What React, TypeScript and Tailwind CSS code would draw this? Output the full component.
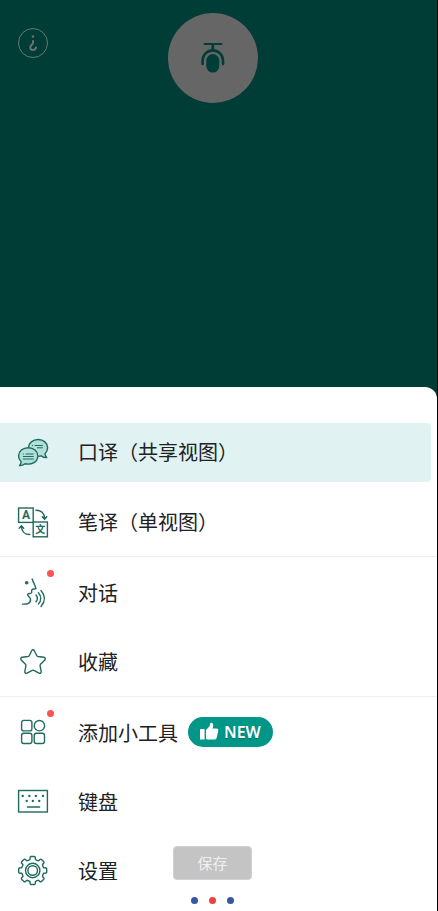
import { ReactNode, useState } from "react";

type MenuItem = {
  id: string;
  label: string;
  icon: ReactNode;
  hasDot?: boolean;
  isNew?: boolean;
};

const Icon = ({ children }: { children: ReactNode }) => (
  <svg
    className="size-[30px] overflow-visible"
    viewBox="0 0 30 30"
    fill="none"
    stroke="#1f6b5c"
    strokeWidth="1.4"
    strokeLinecap="round"
    strokeLinejoin="round"
    aria-hidden="true"
  >
    {children}
  </svg>
);

const ChatIcon = () => (
  <Icon>
    <path
      d="M10.5 9.8C10.5 5 14.8 1.5 20.2 1.5S29.600 5 29.600 9.800c0 2.500-1 4.500-2.600 6 .2 1.500.8 2.600 1.700 3.800-2.300.1-4.100-.6-5.500-1.700-6.700 1.600-12.700-2-12.700-8.100z"
      fill="#b2dfdb"
    />
    <path d="M14.500 7.500h.2M17 7.500h7.500M19.500 9.800h5" strokeWidth="1" />
    <path
      d="M19.800 17.900c0-4.700-4.300-8.200-9.600-8.200S.6 13.200.6 17.900c0 2.500 1 4.400 2.600 5.900-.2 1.500-.7 2.600-1.700 3.800 2.300.1 4.100-.6 5.500-1.800 6.800 1.500 12.800-2 12.800-7.900z"
      fill="#b2dfdb"
    />
    <path d="M5.300 16h.2M8 16h7.300M5.300 18.500h10M5.300 21h10" strokeWidth="1" />
  </Icon>
);

const TranslateIcon = () => (
  <Icon>
    <g strokeLinejoin="miter">
      <rect x="0.600" y="0" width="14.600" height="14.400" />
      <rect x="15.200" y="14" width="14.200" height="14.800" />
    </g>
    <path d="M18 2.200c5 0 8.600 3 8.600 8.400M24.200 8.700l2.400 2.500 2.200-2.500" />
    <path d="M11.800 26.500c-5 0-8.400-3.300-8.400-8.600M1.200 20.300l2.200-2.600 2.300 2.600" />
    <text
      x="8"
      y="11.400"
      textAnchor="middle"
      className="font-['Roboto',sans-serif]"
      fontSize="12"
      fontWeight="700"
      fill="#1f6b5c"
      stroke="none"
    >
      A
    </text>
    <text
      x="22.300"
      y="25"
      textAnchor="middle"
      fontSize="10"
      fontWeight="700"
      fill="#1f6b5c"
      stroke="none"
    >
      文
    </text>
  </Icon>
);

const TalkIcon = () => (
  <Icon>
    <circle cx="8.700" cy="3.700" r="1.800" fill="#1f6b5c" stroke="none" />
    <path d="M14.200 0c.4 1.800 1.300 3.300 2.100 5.100l1.700 4.300c-1 .9-3.200.3-4.100 1.300-.8.900.2 2.300-.4 3.200-.8 1-3.500.2-3.900 1.500-.4 1.600 2.500 2.300 2.900 4.600.2 1.600-.8 3.700-2.300 4.500-1.400.7-3.800.6-5.800.6" />
    <path d="M18 16c1.700 2 1.700 4.700 0 6.700M20.400 13.700c3 3.400 3 8 0 11.400M23 11.500c4.300 5 4.300 11 0 16" />
  </Icon>
);

const StarIcon = () => (
  <Icon>
    <path d="M13.700 2.700c.6-1.200 2-1.200 2.600 0l2.500 5c.2.400.6.700 1.100.8l6 .8c1.300.2 1.800 1.700.9 2.600l-4.300 4.400c-.4.400-.5.800-.4 1.300l1.100 6c.2 1.300-1.100 2.200-2.200 1.600l-5.200-2.800c-.5-.3-1.100-.3-1.600 0L9 25.200c-1.100.6-2.400-.3-2.200-1.600l1.100-6c.1-.5 0-.9-.4-1.300l-4.300-4.400c-.9-.9-.4-2.400.9-2.600l6-.8c.5-.1.900-.4 1.100-.8z" />
  </Icon>
);

const WidgetsIcon = () => (
  <Icon>
    <rect x="3.600" y="1.400" width="10.300" height="10.500" rx="2.200" />
    <circle cx="21.400" cy="6.700" r="5.200" />
    <rect x="3.600" y="14.200" width="10.300" height="10.300" rx="2.200" />
    <rect x="16.200" y="14.200" width="10.300" height="10.300" rx="2.200" />
  </Icon>
);

const KeyboardIcon = () => (
  <Icon>
    <rect x="0.600" y="2.500" width="28.800" height="21.500" strokeLinejoin="miter" />
    <path
      d="M4.700 8h.1M11.300 8h.1M17.800 8h.1M24.900 8h.1M8.700 13h.1M14.800 13h.1M21.200 13h.1"
      strokeWidth="2.300"
    />
    <path d="M9.600 19h11.800" strokeWidth="1.700" />
  </Icon>
);

const GearIcon = () => {
  // eight teeth, one every 45 degrees
  const point = (radius: number, degrees: number) => {
    const a = (degrees * Math.PI) / 180;
    return `${(14.7 + radius * Math.cos(a)).toFixed(2)} ${(
      13.5 + radius * Math.sin(a)
    ).toFixed(2)}`;
  };
  const teeth = [0, 45, 90, 135, 180, 225, 270, 315].map(
    (d) =>
      `L${point(11.4, d - 14)} Q${point(12, d - 12)} ${point(13, d - 12)} ` +
      `Q${point(14, d - 11)} ${point(14.1, d - 7)} L${point(14.1, d + 7)} ` +
      `Q${point(14, d + 11)} ${point(13, d + 12)} Q${point(12, d + 12)} ${point(11.4, d + 14)} ` +
      `Q${point(10.8, d + 22)} ${point(11.4, d + 31)}`
  );
  return (
    <Icon>
      <path d={`M${point(11.4, -14)} ${teeth.join(" ")}z`} />
      <circle cx="14.700" cy="13.500" r="7.200" />
      <circle cx="14.700" cy="13.500" r="4.800" />
    </Icon>
  );
};

const groups: MenuItem[][] = [
  [
    { id: "interpret", label: "口译（共享视图）", icon: <ChatIcon /> },
    { id: "translate", label: "笔译（单视图）", icon: <TranslateIcon /> },
  ],
  [
    { id: "talk", label: "对话", icon: <TalkIcon />, hasDot: true },
    { id: "favorites", label: "收藏", icon: <StarIcon /> },
  ],
  [
    {
      id: "widgets",
      label: "添加小工具",
      icon: <WidgetsIcon />,
      hasDot: true,
      isNew: true,
    },
    { id: "keyboard", label: "键盘", icon: <KeyboardIcon /> },
    { id: "settings", label: "设置", icon: <GearIcon /> },
  ],
];

const NewBadge = () => (
  <span className="mb-1 ml-2.5 flex h-[30px] items-center gap-1 rounded-full bg-[#009688] px-3 text-base font-semibold text-white text-shadow-sm">
    <svg className="size-5" viewBox="0 0 20 20" fill="currentColor" aria-hidden="true">
      <rect x="0" y="7" width="4.600" height="10.500" rx="0.600" />
      <path d="M6 8 9.300 4.600c.6-.7.7-1.700.8-2.800C10.200.8 11 .5 11.600.7c1.500.5 1.900 2 1.500 3.700l-.6 2.200h4.300c1.200 0 1.800 1 1.500 2l-1.600 7.100c-.3 1.100-1.100 1.800-2.300 1.800H7.200c-.8 0-1.200-.5-1.200-1.200z" />
    </svg>
    NEW
  </span>
);

const MenuRow = ({
  item,
  selected,
  onSelect,
}: {
  item: MenuItem;
  selected: boolean;
  onSelect: () => void;
}) => (
  <li className="pr-1.5">
    <button
      type="button"
      onClick={onSelect}
      className={`flex h-[59px] w-full cursor-pointer items-center rounded-r-sm pl-[18px] text-left text-xl text-[#212121] ${
        selected ? "bg-[#e0f2f1]" : ""
      }`}
    >
      <span className="relative mr-[30px]">
        {item.icon}
        {item.hasDot && (
          <span className="absolute -top-[9px] -right-1.5 size-[7px] rounded-full bg-[#ff5252]" />
        )}
      </span>
      {item.label}
      {item.isNew && <NewBadge />}
    </button>
  </li>
);

export default function App() {
  const [active, setActive] = useState("interpret");

  return (
    <main className="flex min-h-screen flex-col border-r border-black bg-[#003d36] font-['Noto_Sans','Noto_Sans_CJK_SC',sans-serif]">
      <header className="relative flex grow justify-center pt-[13px] pr-3 pb-10">
        <button
          type="button"
          aria-label="帮助"
          className="absolute top-7 left-[18px] flex size-[30px] cursor-pointer items-center justify-center rounded-full border border-[#667a76]"
        >
          <svg
            className="size-7"
            viewBox="0 0 28 28"
            fill="none"
            stroke="#6b716f"
            strokeWidth="2"
            strokeLinecap="round"
            aria-hidden="true"
          >
            <circle cx="14" cy="7.500" r="1.300" fill="#6b716f" stroke="none" />
            <path d="M14 12v1.800c0 2-2.700 2.200-2.700 4.600 0 1.500 1.300 2.500 2.800 2.500s2.700-.9 2.900-2.300" />
          </svg>
        </button>
        <button
          type="button"
          aria-label="麦克风"
          className="flex size-[90px] cursor-pointer items-center justify-center rounded-full bg-[#666]"
        >
          <svg
            className="size-[30px] overflow-visible"
            viewBox="0 0 30 30"
            fill="none"
            stroke="#003d36"
            aria-hidden="true"
          >
            <path d="M6.500 1h17" strokeWidth="2" strokeLinecap="round" />
            <path d="M14.800 1v6.600" strokeWidth="2.800" />
            <path
              d="M4.600 21V17.600a10.200 10.200 0 0 1 20.400 0V21"
              strokeWidth="2.600"
              strokeLinecap="round"
            />
            <rect x="8.300" y="11" width="13" height="18.600" rx="6.500" fill="#003d36" stroke="none" />
          </svg>
        </button>
      </header>

      <section className="relative rounded-tr-xl bg-white pt-9 pb-2.5">
        <nav className="divide-y divide-[#eee]">
          {groups.map((group, i) => (
            <ul
              key={i}
              className="flex flex-col gap-2.5 pt-[7px] pb-1 first:gap-[11px] first:pt-0 last:pb-0"
            >
              {group.map((item) => (
                <MenuRow
                  key={item.id}
                  item={item}
                  selected={active === item.id}
                  onSelect={() => setActive(item.id)}
                />
              ))}
            </ul>
          ))}
        </nav>

        <div className="pointer-events-none absolute inset-x-0 bottom-[7px] flex flex-col items-center gap-[17px] pr-3">
          <button
            type="button"
            className="pointer-events-auto h-[34px] cursor-pointer rounded-sm border border-[#d0d0d0] bg-[#c4c4c4] px-[23px] text-[15px] text-[#f0f0f0]"
          >
            保存
          </button>
          <div className="flex gap-[11px]">
            <span className="size-[7px] rounded-full bg-[#3955a3]" />
            <span className="size-[7px] rounded-full bg-[#f03e3e]" />
            <span className="size-[7px] rounded-full bg-[#3955a3]" />
          </div>
        </div>
      </section>
    </main>
  );
}
